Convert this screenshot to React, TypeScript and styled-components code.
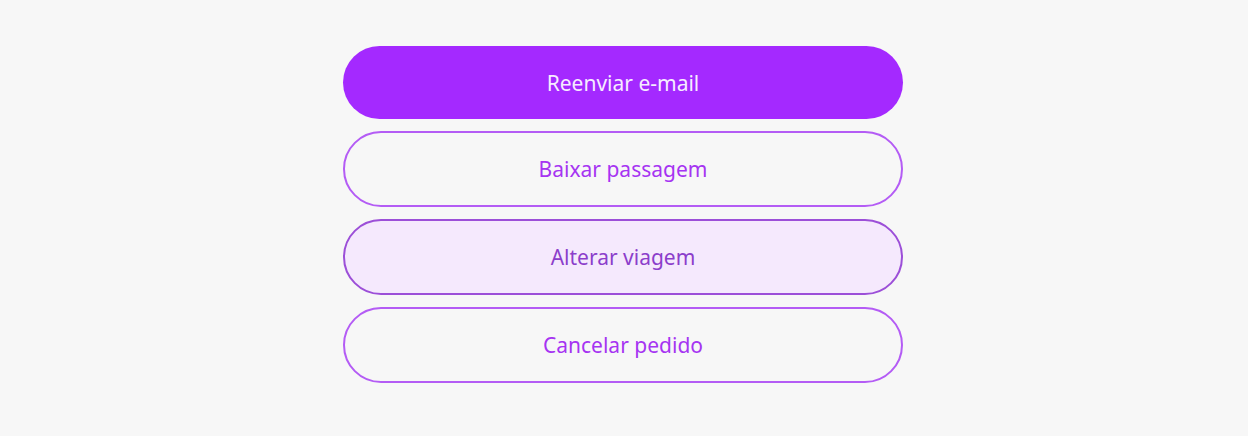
import React from 'react';
import styled, { createGlobalStyle, css } from 'styled-components';

type Variant = 'solid' | 'outline' | 'soft';

const GlobalStyle = createGlobalStyle`
  html, body {
    margin: 0;
    padding: 0;
    background: #f7f7f7;
    font-family: 'Noto Sans', 'Open Sans', sans-serif;
  }
`;

const Page = styled.div`
  min-height: 436px;
  box-sizing: border-box;
  padding: 46px 2px 0 0;
  display: flex;
  justify-content: center;
`;

const Actions = styled.div`
  width: 560px;
  display: flex;
  flex-direction: column;
  gap: 12px;
`;

const ActionButton = styled.button<{ $variant: Variant }>`
  height: 76px;
  border-radius: 38px;
  font-family: inherit;
  font-size: 21px;
  cursor: pointer;
  box-sizing: border-box;
  border: 2px solid #b45cf5;
  background: transparent;
  color: #a634f2;

  ${({ $variant }) =>
    $variant === 'solid' &&
    css`
      height: 73px;
      border: none;
      background: #a429ff;
      color: #f6ecff;
    `}

  ${({ $variant }) =>
    $variant === 'soft' &&
    css`
      border-color: #9c4fd8;
      background: #f5e9fd;
      color: #8c3ecb;
    `}
`;

const actions: { label: string; variant: Variant }[] = [
  { label: 'Reenviar e-mail', variant: 'solid' },
  { label: 'Baixar passagem', variant: 'outline' },
  { label: 'Alterar viagem', variant: 'soft' },
  { label: 'Cancelar pedido', variant: 'outline' },
];

export default function App() {
  return (
    <>
      <GlobalStyle />
      <Page>
        <Actions>
          {actions.map((a) => (
            <ActionButton key={a.label} $variant={a.variant}>
              {a.label}
            </ActionButton>
          ))}
        </Actions>
      </Page>
    </>
  );
}
